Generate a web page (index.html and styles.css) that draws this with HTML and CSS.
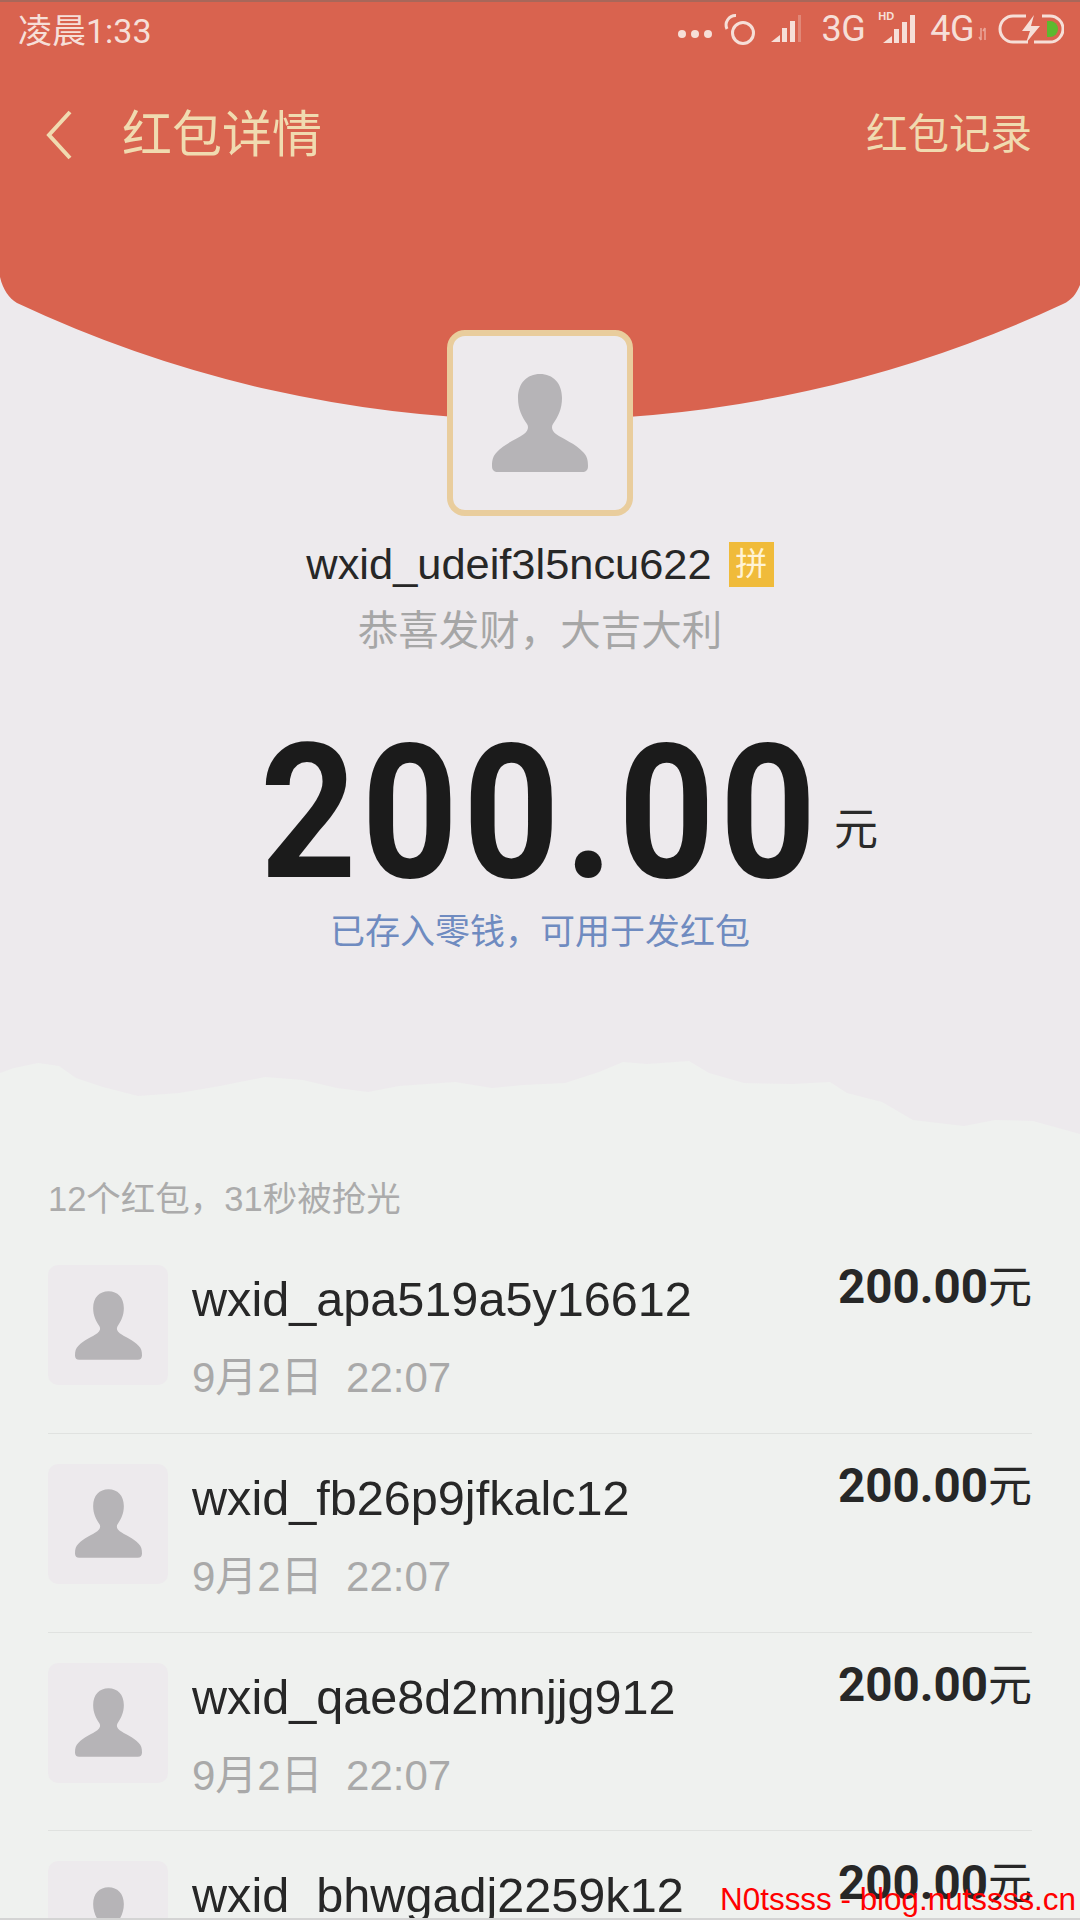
FILE: index.html
```html
<!DOCTYPE html>
<html lang="zh">
<head>
<meta charset="utf-8">
<title>红包详情</title>
<link rel="stylesheet" href="styles.css">
</head>
<body>
<svg class="defs" width="0" height="0" aria-hidden="true">
  <symbol id="person" viewBox="0 0 96 98">
    <path d="M48 0C35 0 26 9 26 24C26 35 30 43 35 50C37 53 36 57 32 60C25 65 12 70 5 78C1 82 0 86 0 92C0 96 2 98 6 98H90C94 98 96 96 96 92C96 86 95 82 91 78C84 70 71 65 64 60C60 57 59 53 61 50C66 43 70 35 70 24C70 9 61 0 48 0Z"/>
  </symbol>
</svg>
<div class="page">
  <section class="hero">
    <svg class="arc" viewBox="0 0 1080 420" aria-hidden="true">
      <path d="M0 0H1080V285C1076 294 1072 300 1063 304A1230 1230 0 0 1 540 420A1230 1230 0 0 1 17 303C9 298 3 290 0 277Z"/>
    </svg>
    <div class="status">
      <span class="clock">凌晨1:33</span>
      <div class="status-icons">
        <svg class="ic-dots" viewBox="0 0 36 10"><circle cx="5" cy="5" r="4"/><circle cx="18" cy="5" r="4"/><circle cx="31" cy="5" r="4"/></svg>
        <svg class="ic-loop" viewBox="0 0 34 34"><circle cx="21" cy="21" r="10.5"/><path d="M14 3.5A9.5 9.5 0 0 0 5 17"/></svg>
        <svg class="ic-bars" viewBox="0 0 32 30"><path d="M0 28L9 21V28Z"/><rect x="11" y="14" width="5" height="14"/><rect x="19" y="7" width="5" height="21"/><rect class="dim" x="27" y="1" width="3" height="27"/></svg>
        <span class="net">3G</span>
        <div class="hd-signal">
          <span class="hd">HD</span>
          <svg class="ic-bars-hd" viewBox="0 0 32 30"><path d="M0 28L9 21V28Z"/><rect x="11" y="14" width="5" height="14"/><rect x="19" y="7" width="5" height="21"/><rect x="27" y="0" width="5" height="28"/></svg>
        </div>
        <span class="net net-4g">4G</span>
        <svg class="ic-arrows" viewBox="0 0 10 14"><path d="M3 1V13M1 10L3 13M7 13V1M5 4L7 1"/></svg>
        <svg class="ic-batt" viewBox="0 0 66 30">
          <path class="batt-line" d="M28 2H15A13 13 0 0 0 15 28H30M44 2H52A13 13 0 0 1 52 28H36"/>
          <path class="batt-bolt" d="M36 1L24 17H32L28 29L42 12H33Z"/>
          <path class="batt-fill" d="M49 7H52A8 8 0 0 1 52 23H49Z"/>
        </svg>
      </div>
    </div>
    <header class="nav">
      <svg class="back" viewBox="0 0 30 50"><path d="M26 2L5 25L26 48"/></svg>
      <h1 class="nav-title">红包详情</h1>
      <a class="nav-link">红包记录</a>
    </header>
    <div class="sender">
      <div class="avatar-lg"><svg class="person-lg"><use href="#person"/></svg></div>
      <div class="sender-line">
        <span class="sender-name">wxid_udeif3l5ncu622</span>
        <span class="badge">拼</span>
      </div>
      <p class="wish">恭喜发财，大吉大利</p>
      <div class="amount"><span class="amount-num">200.00</span><span class="amount-unit">元</span></div>
      <p class="note">已存入零钱，可用于发红包</p>
    </div>
  </section>
  <svg class="torn" viewBox="0 0 1080 80" aria-hidden="true">
    <path d="M0 13L14 8L38 3L59 6L76 18L103 27L138 36L179 33L220 26L265 17L303 20L337 28L368 32L399 26L455 22L492 28L523 25L565 23L599 12L623 2L647 4L689 1L709 13L744 23L792 24L830 22L847 33L882 42L913 60L964 66L995 60L1033 61L1080 74V80H0Z"/>
  </svg>
  <section class="list">
    <p class="list-head">12个红包，31秒被抢光</p>
    <div class="row">
      <div class="avatar-sm"><svg class="person-sm"><use href="#person"/></svg></div>
      <div class="row-main"><div class="row-name">wxid_apa519a5y16612</div><div class="row-time">9月2日&nbsp;&nbsp;22:07</div></div>
      <div class="row-money">200.00<span class="row-unit">元</span></div>
    </div>
    <div class="row">
      <div class="avatar-sm"><svg class="person-sm"><use href="#person"/></svg></div>
      <div class="row-main"><div class="row-name">wxid_fb26p9jfkalc12</div><div class="row-time">9月2日&nbsp;&nbsp;22:07</div></div>
      <div class="row-money">200.00<span class="row-unit">元</span></div>
    </div>
    <div class="row">
      <div class="avatar-sm"><svg class="person-sm"><use href="#person"/></svg></div>
      <div class="row-main"><div class="row-name">wxid_qae8d2mnjjg912</div><div class="row-time">9月2日&nbsp;&nbsp;22:07</div></div>
      <div class="row-money">200.00<span class="row-unit">元</span></div>
    </div>
    <div class="row">
      <div class="avatar-sm"><svg class="person-sm"><use href="#person"/></svg></div>
      <div class="row-main"><div class="row-name">wxid_bhwgadj2259k12</div><div class="row-time">9月2日&nbsp;&nbsp;22:07</div></div>
      <div class="row-money">200.00<span class="row-unit">元</span></div>
    </div>
  </section>
  <div class="watermark">N0tssss - blog.nutssss.cn</div>
</div>
</body>
</html>
```
FILE: styles.css
```css
* { box-sizing: border-box; }
html, body { margin: 0; padding: 0; }
body { font-family: "Liberation Sans", "Noto Sans CJK SC", sans-serif; }
h1, p { margin: 0; font-weight: 400; }
.defs { position: absolute; }
.page { position: relative; width: 1080px; height: 1920px; overflow: hidden; background: #eff1ef; border-top: 2px solid #a8675a; border-bottom: 2px solid #d4d4d4; }

.hero { position: relative; height: 1058px; background: #edeaed; display: flex; flex-direction: column; }
.arc { position: absolute; left: 0; top: -2px; width: 1080px; height: 420px; fill: #d9634f; }

.status { position: relative; height: 62px; padding: 0 16px 10px 18px; display: flex; align-items: center; justify-content: space-between; color: #f6dfd8; }
.clock { font-family: Roboto, "Noto Sans CJK SC", sans-serif; font-size: 34px; }
.status-icons { display: flex; align-items: center; margin-top: 2px; }
.status-icons svg { display: block; fill: #f6dfd8; }
.ic-dots { width: 36px; height: 10px; margin-top: 10px; margin-right: 9px; }
.status-icons .ic-loop { width: 34px; height: 34px; margin-right: 15px; fill: none; stroke: #f6dfd8; stroke-width: 3; }
.ic-bars { width: 32px; height: 30px; margin-right: 18px; }
.dim { opacity: .3; }
.net { font-family: Roboto, sans-serif; font-size: 36px; line-height: 34px; letter-spacing: -.5px; }
.hd-signal { position: relative; width: 38px; height: 34px; margin-left: 13px; }
.hd { position: absolute; left: 0; top: -1px; font-size: 11px; line-height: 11px; font-weight: 700; }
.status-icons .ic-bars-hd { position: absolute; left: 4px; top: 3px; width: 34px; height: 30px; }
.net-4g { margin-left: 14px; }
.status-icons .ic-arrows { width: 10px; height: 14px; margin: 10px 10px 0 4px; fill: none; stroke: #eaa79a; stroke-width: 1.5; }
.status-icons .ic-batt { width: 66px; height: 30px; fill: none; }
.status-icons .batt-line { fill: none; stroke: #f6dfd8; stroke-width: 3; }
.status-icons .batt-bolt { fill: #f6dfd8; }
.status-icons .batt-fill { fill: #5cb92f; }

.nav { position: relative; height: 138px; padding: 4px 48px 0 44px; display: flex; align-items: center; color: #f0dbb0; }
.back { width: 30px; height: 50px; margin-right: 48px; fill: none; stroke: #f0dbb0; stroke-width: 4; }
.nav-title { flex: 1; font-size: 50px; line-height: 60px; }
.nav-link { font-size: 41.5px; line-height: 60px; }

.sender { position: relative; display: flex; flex-direction: column; align-items: center; padding-top: 128px; }
.avatar-lg { width: 186px; height: 186px; border: 6px solid #e9cd9d; border-radius: 18px; background: #edeaed; display: flex; align-items: center; justify-content: center; }
.person-lg { width: 96px; height: 98px; fill: #b6b4b7; }
.sender-line { display: flex; align-items: center; gap: 17px; height: 50px; margin-top: 23px; }
.sender-name { font-size: 43.4px; line-height: 50px; color: #272727; }
.badge { width: 45px; height: 45px; background: #f0bb3a; color: #fff3d6; font-size: 32px; line-height: 44px; text-align: center; }
.wish { margin-top: 14px; font-size: 40.5px; line-height: 56px; color: #a6a6a6; }
.amount { display: flex; align-items: center; margin-top: 60px; height: 190px; line-height: 190px; padding-left: 58px; }
.amount-num { display: block; font-family: Roboto, sans-serif; font-size: 187px; font-weight: 700; color: #1b1b1b; letter-spacing: 5.5px; transform: scaleX(.9); transform-origin: left center; margin-right: -61.75px; }
.amount-unit { font-size: 44px; line-height: 60px; margin-top: 32px; margin-left: 12px; color: #2a2a2a; }
.note { font-size: 35px; line-height: 46px; color: #6f8bc0; }

.torn { display: block; width: 1080px; height: 80px; background: #edeaed; fill: #eff1ef; }

.list { padding: 37px 48px 0; }
.list-head { font-size: 34.5px; line-height: 44px; color: #ababab; margin-bottom: 14px; }
.row { display: flex; align-items: flex-start; height: 198.8px; padding-top: 30px; border-bottom: 1px solid #e0e2e0; flex-shrink: 0; }
.avatar-sm { width: 120px; height: 120px; border-radius: 10px; background: #edeaed; display: flex; align-items: center; justify-content: center; flex-shrink: 0; }
.person-sm { width: 67px; height: 69px; fill: #b6b4b7; }
.row-main { flex: 1; margin-left: 24px; }
.row-name { font-size: 48.6px; line-height: 60px; color: #272727; margin-top: 4px; }
.row-time { font-size: 42px; line-height: 50px; color: #a9a9a9; margin-top: 24px; }
.row-money { font-family: Roboto, "Noto Sans CJK SC", sans-serif; font-size: 47.5px; line-height: 60px; font-weight: 700; color: #272727; margin-top: -8px; white-space: nowrap; }
.row-unit { font-size: 44px; font-weight: 400; }

.watermark { position: absolute; right: 4px; bottom: 0; font-size: 31.4px; line-height: 36px; color: #ff0000; white-space: nowrap; }
```
